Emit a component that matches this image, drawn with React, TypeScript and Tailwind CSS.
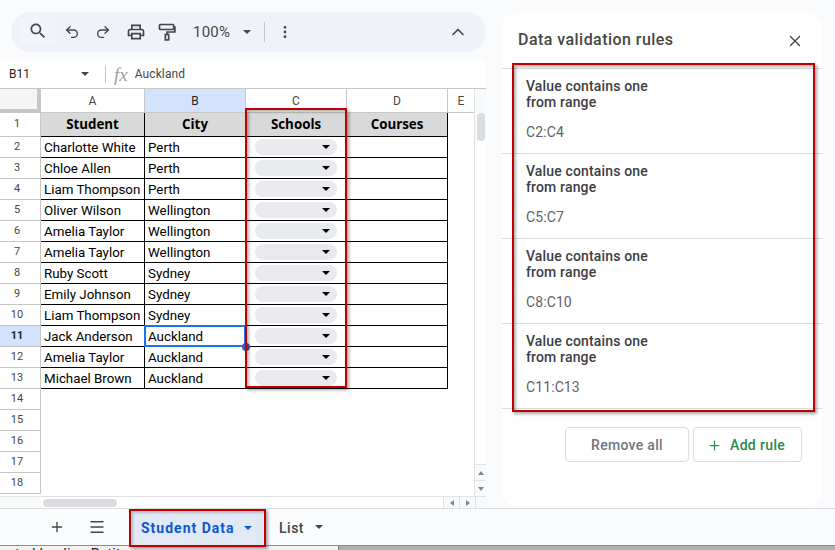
import React from "react";
import { Plus, Menu, X, ChevronUp, EllipsisVertical, Undo2, Redo2 } from "lucide-react";

const rows: [string, string][] = [
  ["Charlotte White", "Perth"],
  ["Chloe Allen", "Perth"],
  ["Liam Thompson", "Perth"],
  ["Oliver Wilson", "Wellington"],
  ["Amelia Taylor", "Wellington"],
  ["Amelia Taylor", "Wellington"],
  ["Ruby Scott", "Sydney"],
  ["Emily Johnson", "Sydney"],
  ["Liam Thompson", "Sydney"],
  ["Jack Anderson", "Auckland"],
  ["Amelia Taylor", "Auckland"],
  ["Michael Brown", "Auckland"],
];
const ranges = ["C2:C4", "C5:C7", "C8:C10", "C11:C13"];

function Tri({ w = 8, h = 4, color = "#000" }: { w?: number; h?: number; color?: string }) {
  return (
    <svg width={w} height={h} viewBox="0 0 8 4" className="shrink-0">
      <path d="M0 0h8L4 4z" fill={color} />
    </svg>
  );
}

function RowHead({ n, h, active }: { n: number; h: string; active?: boolean }) {
  return (
    <div
      className={`${h} w-[41px] shrink-0 flex items-center justify-center pr-[6px] border-r border-b border-[#c7c7c7] text-[11px] ${
        active ? "bg-[#d3e3fd] font-bold text-[#1f1f1f]" : "bg-white text-[#444746]"
      }`}
    >
      {n}
    </div>
  );
}

function ColHead({ w, label, active }: { w: string; label: string; active?: boolean }) {
  return (
    <div
      className={`${w} shrink-0 h-full flex items-center justify-center border-r border-[#c7c7c7] text-[12px] ${
        active ? "bg-[#d3e3fd] text-[#1f1f1f]" : "bg-white text-[#444746]"
      }`}
    >
      {label}
    </div>
  );
}

function Rule({ range }: { range: string }) {
  return (
    <div className="h-[85px] border-b border-[#dadce0] pl-6 pt-[9px]">
      <div className="text-[14px] leading-4 font-medium tracking-[0.15px] text-[#3c4043]">
        Value contains one
        <br />
        from range
      </div>
      <div className="mt-[14px] text-[14px] leading-4 tracking-[0.1px] text-[#5f6368]">{range}</div>
    </div>
  );
}

export default function App() {
  return (
    <div className="relative w-[835px] h-[550px] overflow-hidden bg-[#f9fbfd] font-['Roboto',sans-serif]">
      <div className="flex h-[508px]">
        {/* Left column */}
        <div className="w-[486px] shrink-0 flex flex-col">
          <div className="ml-[11px] mt-3 h-10 rounded-l-[20px] rounded-r-[20px] bg-[#eff3f9] flex items-center text-[#444746]">
            <div className="ml-2 w-[38px] h-7 flex items-center justify-center bg-[#f1f4fb] -translate-y-[1px]">
              <svg width="20" height="20" viewBox="0 0 24 24" fill="#444746">
                <path d="M15.5 14h-.79l-.28-.27C15.41 12.59 16 11.11 16 9.5 16 5.91 13.09 3 9.5 3S3 5.91 3 9.5 5.91 16 9.5 16c1.61 0 3.09-.59 4.23-1.57l.27.28v.79l5 4.99L20.49 19l-4.99-5zm-6 0C7.01 14 5 11.99 5 9.5S7.01 5 9.5 5 14 7.01 14 9.5 11.99 14 9.5 14z" />
              </svg>
            </div>
            <Undo2 size={16} strokeWidth={2} className="ml-[7px]" />
            <Redo2 size={16} strokeWidth={2} className="ml-[15px]" />
            <svg width="20" height="20" viewBox="0 0 24 24" fill="#444746" className="ml-[15px]">
              <path d="M19 8h-1V3H6v5H5c-1.66 0-3 1.34-3 3v6h4v4h12v-4h4v-6c0-1.66-1.34-3-3-3zM8 5h8v3H8V5zm8 12v2H8v-4h8v2zm2-2v-2H6v2H4v-4c0-.55.45-1 1-1h14c.55 0 1 .45 1 1v4h-2z" />
            </svg>
            <svg width="20" height="20" viewBox="0 0 24 24" fill="none" stroke="#444746" strokeWidth="2" className="ml-[11px]">
              <rect x="3" y="3" width="17" height="6" rx="1" />
              <path d="M20 6h1.5v6H12v3" />
              <rect x="10" y="15" width="4" height="6.5" />
            </svg>
            <span className="ml-[16px] text-[15px] tracking-[0.25px] text-[#444746]">100%</span>
            <span className="ml-[13px]">
              <Tri color="#444746" />
            </span>
            <div className="ml-[13px] w-px h-5 bg-[#c7c7c7]" />
            <EllipsisVertical size={16} strokeWidth={2.2} className="ml-[12px]" />
            <ChevronUp size={20} strokeWidth={2} className="ml-auto mr-[18px]" />
          </div>

          {/* Formula bar */}
          <div className="mt-2 h-[29px] bg-white border-b border-[#c7c7c7] flex items-center text-[#444746] shrink-0">
            <span className="ml-[9px] w-[72px] text-[#1f1f1f] text-[12px]">B11</span>
            <Tri color="#444746" />
            <div className="ml-4 w-px h-[17px] bg-[#c7c7c7]" />
            <span className="ml-[8px] font-['Liberation_Serif',serif] italic text-[#9aa0a6] text-[19px] leading-none">fx</span>
            <span className="ml-[7px] text-[12px] tracking-[0.1px] text-[#444746]">Auckland</span>
          </div>

          {/* Grid */}
          <div className="flex h-[407px]">
            <div className="w-[475px] shrink-0 bg-white border-r border-[#e1e3e1] overflow-hidden">
              <div className="flex h-6">
                <div className="w-[41px] h-6 shrink-0 bg-[#f5f5f5] border-r-4 border-b-4 border-[#c7c7c7]" />
                <div className="flex h-6 border-b border-[#c7c7c7]">
                  <ColHead w="w-[104px]" label="A" />
                  <ColHead w="w-[101px]" label="B" active />
                  <ColHead w="w-[101px]" label="C" />
                  <ColHead w="w-[101px]" label="D" />
                  <ColHead w="w-[27px]" label="E" />
                </div>
              </div>

              <div className="flex">
                <RowHead n={1} h="h-6" />
                <div className="flex h-6 w-[407px] bg-[#d9d9d9] border-b border-black text-[13.33px] font-bold text-black font-['Open_Sans',sans-serif]">
                  {["Student", "City", "Schools", "Courses"].map((t, i) => (
                    <div
                      key={t}
                      className={`${i === 0 ? "w-[104px]" : "w-[101px]"} h-full flex items-center justify-center pt-px border-r border-black`}
                    >
                      {t}
                    </div>
                  ))}
                </div>
              </div>

              {rows.map(([name, city], i) => (
                <div key={i} className="flex">
                  <RowHead n={i + 2} h="h-[21px]" active={i === 9} />
                  <div className="flex h-[21px] w-[407px] border-b border-black text-[13.33px] text-black">
                    <div className="w-[104px] h-full flex items-center pl-[3px] pt-px border-r border-black whitespace-nowrap overflow-hidden">
                      {name}
                    </div>
                    <div className="w-[101px] h-full flex items-center pl-[3px] pt-px border-r border-black">{city}</div>
                    <div className="w-[101px] h-full flex items-center pl-[9px] border-r border-black">
                      <div className="w-[82px] h-4 rounded-full bg-[#e8eaed] flex items-center justify-end pr-[7px]">
                        <Tri />
                      </div>
                    </div>
                    <div className="w-[101px] h-full border-r border-black" />
                  </div>
                </div>
              ))}

              {[14, 15, 16, 17, 18].map((n) => (
                <RowHead key={n} n={n} h="h-[21px]" />
              ))}
            </div>

            {/* Vertical scrollbar */}
            <div className="w-[11px] shrink-0 bg-[#f8f9fa] flex flex-col">
              <div className="h-[24px]" />
              <div className="ml-[2px] w-2 h-[28px] rounded-full bg-[#dadce0]" />
              <div className="h-[323px] bg-white" />
              <div className="h-[16px] border-t border-[#e1e3e1] flex items-center justify-center">
                <svg width="6" height="4" viewBox="0 0 6 4"><path d="M0 4h6L3 0z" fill="#80868b" /></svg>
              </div>
              <div className="h-[16px] border-t border-[#e1e3e1] flex items-center justify-center">
                <svg width="6" height="4" viewBox="0 0 6 4"><path d="M0 0h6L3 4z" fill="#80868b" /></svg>
              </div>
            </div>
          </div>

          {/* Horizontal scrollbar */}
          <div className="h-3 flex bg-[#f8f9fa] border-t border-[#e1e3e1]">
            <div className="w-[41px] shrink-0" />
            <div className="w-[402px] shrink-0 bg-white flex items-center">
              <div className="ml-[2px] w-[74px] h-2 rounded-full bg-[#dadce0]" />
            </div>
            <div className="w-4 shrink-0 border-l border-[#e1e3e1] flex items-center justify-center">
              <svg width="4" height="6" viewBox="0 0 4 6"><path d="M4 0v6L0 3z" fill="#80868b" /></svg>
            </div>
            <div className="w-4 shrink-0 border-l border-[#e1e3e1] flex items-center justify-center">
              <svg width="4" height="6" viewBox="0 0 4 6"><path d="M0 0v6l4-3z" fill="#80868b" /></svg>
            </div>
            <div className="w-[11px] shrink-0 border-l border-[#e1e3e1]" />
          </div>
        </div>

        {/* Side panel */}
        <div className="ml-4 mt-3 w-[320px] h-[495px] rounded-[16px] bg-white flex flex-col">
          <div className="h-[57px] border-b border-[#dadce0] flex items-center pl-4 pr-[18px] shrink-0">
            <span className="text-[16px] text-[#444746] font-medium tracking-[0.45px]">Data validation rules</span>
            <X size={18} strokeWidth={1.8} className="ml-auto text-[#444746] translate-y-[1px]" />
          </div>
          {ranges.map((r) => (
            <Rule key={r} range={r} />
          ))}
          <div className="flex justify-end gap-1 pr-5 pt-[18px]">
            <div className="w-[124px] h-[35px] rounded border border-[#dadce0] flex items-center justify-center pt-px text-[14px] font-medium tracking-[0.3px] text-[#70757a]">
              Remove all
            </div>
            <div className="w-[109px] h-[35px] rounded border border-[#dadce0] flex items-center pl-[13px] pt-px gap-2 text-[14px] font-medium tracking-[0.35px] text-[#2a8a4a]">
              <Plus size={15} strokeWidth={2} />
              Add rule
            </div>
          </div>
        </div>
      </div>

      {/* Sheet tabs */}
      <div className="h-[37px] border-t border-[#dadce0] bg-[#f9fbfd] flex items-center text-[#444746]">
        <Plus size={16} strokeWidth={2} className="ml-[49px]" />
        <Menu size={18} strokeWidth={1.8} className="ml-[23px]" />
        <div className="ml-[26px] w-[133px] h-[36px] bg-[#e1e9f7] flex items-center pl-[9px] pt-[2px] text-[14px] font-bold tracking-[1px] text-[#0b57d0]">
          Student Data
          <span className="ml-[9px]"><Tri color="#0b57d0" /></span>
        </div>
        <span className="ml-[14px] pt-[2px] text-[14px] font-medium tracking-[0.5px] text-[#444746]">List</span>
        <span className="ml-[11px]"><Tri color="#444746" /></span>
      </div>

      {/* Cut-off strip beneath the window */}
      <div className="flex h-[5px] border-t border-[#8f8f8f] overflow-hidden">
        <div className="w-[339px] bg-[#f2f2f2] border-r border-[#777] text-[14px] leading-4 text-[#222] pl-[7px] tracking-[0.3px] whitespace-nowrap">
          ated leading Petit
        </div>
        <div className="flex-1 bg-[#aeaeae]" />
      </div>

      {/* Selected cell */}
      <div className="absolute left-[144px] top-[325px] w-[102px] h-[22px] border-2 border-[#1a73e8]" />
      <div className="absolute left-[242px] top-[343px] w-2 h-2 rounded-full bg-[#3b5fc0]" />

      {/* Annotation boxes */}
      <div className="absolute left-[245px] top-[108px] w-[102px] h-[280px] border-2 border-[#c00000] shadow-[2px_2px_3px_rgba(0,0,0,0.35),inset_2px_2px_3px_rgba(0,0,0,0.3)]" />
      <div className="absolute left-[512px] top-[63px] w-[303px] h-[349px] border-2 border-[#c00000] shadow-[2px_2px_3px_rgba(0,0,0,0.35),inset_2px_2px_3px_rgba(0,0,0,0.3)]" />
      <div className="absolute left-[129px] top-[509px] w-[137px] h-[38px] border-2 border-[#c00000] shadow-[2px_2px_3px_rgba(0,0,0,0.35),inset_2px_2px_3px_rgba(0,0,0,0.2)]" />
    </div>
  );
}
